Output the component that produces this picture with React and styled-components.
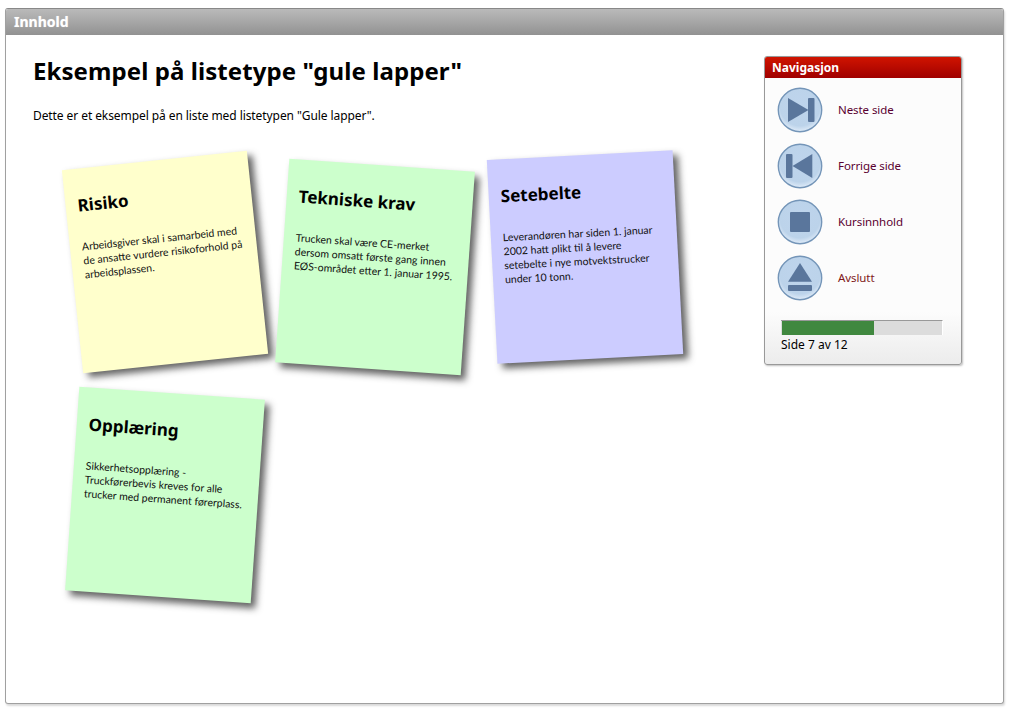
import React from 'react';
import styled, { createGlobalStyle } from 'styled-components';

const Global = createGlobalStyle`
  html, body { margin: 0; padding: 0; background: #fff; }
  body { font-family: "Noto Sans", sans-serif; color: #000; }
`;
const Page = styled.div`
  padding: 8px 5px 0 5px; width: 1010px; height: 709px; box-sizing: border-box; overflow: hidden;
`;
const Panel = styled.section`
  width: 999px; height: 696px; box-sizing: border-box; border: 1px solid #a0a0a0; border-top-color: #888;
  border-radius: 3px; box-shadow: 1px 2px 2px rgba(0,0,0,.15); display: flex; flex-direction: column; overflow: hidden;
`;
const PanelHeader = styled.header`
  height: 26px; flex: none; box-sizing: border-box; padding: 4px 0 0 8px;
  background: linear-gradient(#bababa, #929292); color: #fff;
  font: bold 14px/17px "Noto Sans", sans-serif; text-shadow: 0 0 1px rgba(255,255,255,.5);
`;
const PanelBody = styled.div`
  flex: 1; display: flex; justify-content: space-between; padding: 20px 41px 0 27px;
`;
const Main = styled.main`flex: none; width: 680px;`;
const Title = styled.h1`
  margin: 0; font: bold 24px/32px "Noto Sans", sans-serif; color: #000; letter-spacing: 0.08px;
`;
const Intro = styled.p`
  margin: 20px 0 0; font: 12px/17px "Noto Sans", sans-serif; color: #000; letter-spacing: -0.08px;
`;
const Notes = styled.ul`
  list-style: none; margin: 37px 0 0; padding: 0 0 0 39px; display: flex; flex-wrap: wrap; gap: 28px 24px; width: 660px; box-sizing: border-box;
`;
const Note = styled.li`
  width: 186px; height: 204px; box-sizing: border-box; padding: 26px 12px 0 12px; flex: none;
  background: ${p => p.$bg};
  transform: translateY(${p => p.$dy}px) rotate(${p => p.$rot}deg);
  box-shadow: 5px 5px 7px rgba(33,33,33,.7);
`;
const NoteTitle = styled.h2`
  margin: 0; font: bold 17px/22px "Noto Sans", sans-serif; color: #000; white-space: nowrap;
`;
const NoteText = styled.p`
  margin: 23px 0 0; font: 10.5px/14px "Lato", sans-serif; color: #111; white-space: nowrap;
`;
const Sidebar = styled.aside`
  flex: none; margin-top: 1px; width: 198px; height: 309px; box-sizing: border-box; border: 1px solid #999; border-radius: 3px;
  box-shadow: 1px 1px 2px rgba(0,0,0,.25); overflow: hidden; display: flex; flex-direction: column;
  background: linear-gradient(#fcfcfc 0, #fcfcfc 255px, #ececec 100%);
`;
const SideHead = styled.h3`
  margin: 0; height: 21px; flex: none; box-sizing: border-box; padding: 2px 0 0 7px; color: #fff;
  background: linear-gradient(#d01400, #a00000); font: bold 12px/17px "Noto Sans", sans-serif;
`;
const NavList = styled.nav`
  display: flex; flex-direction: column; gap: 10px; padding: 9px 0 0 12px;
`;
const NavItem = styled.a`
  display: flex; align-items: center; gap: 15px; height: 46px; color: ${p => p.$red ? '#801818' : '#5a0030'};
  font: 11.5px/16px "Noto Sans", sans-serif; letter-spacing: -0.08px; text-decoration: none;
`;
const Progress = styled.div`
  margin: 19px 0 0 16px; width: 162px; height: 15px; box-sizing: border-box; background: #dcdcdc;
  border-top: 1px solid #999; border-right: 1px solid #fff;
`;
const ProgressFill = styled.div`height: 100%; background: #40883f; margin-left: 1px;`;
const ProgressLabel = styled.div`
  margin: 1px 0 0 16px; font: 12px/17px "Noto Sans", sans-serif; color: #000;
`;

const IconSvg = ({ children }) => (
  <svg width="46" height="46" viewBox="0 0 46 46" style={{ flex: 'none' }}>
    <defs>
      <radialGradient id="btn" cx="0.5" cy="0.4" r="0.62">
        <stop offset="0" stopColor="#bed4ec" />
        <stop offset="0.75" stopColor="#bcd3ea" />
        <stop offset="1" stopColor="#e6f0fb" />
      </radialGradient>
    </defs>
    <circle cx="23" cy="23" r="21.7" fill="url(#btn)" stroke="#7495b8" strokeWidth="1.4" />
    <g fill="#5a769c">{children}</g>
  </svg>
);
const Icons = {
  next: <><path d="M11 11 L11 35 L31.5 23 Z" /><rect x="31" y="11" width="6.5" height="24" rx="1" /></>,
  prev: <><rect x="9" y="11" width="6.5" height="24" rx="1" /><path d="M35.3 11 L35.3 35 L15.5 23 Z" /></>,
  stop: <rect x="13" y="13" width="20" height="20" rx="1" />,
  eject: <><path d="M23 8 L11 26.7 L35 26.7 Z" /><rect x="11" y="30" width="24" height="6" rx="1" /></>,
};

const notes = [
  { bg: '#ffffcc', rot: -6, dy: -1, title: 'Risiko', lines: ['Arbeidsgiver skal i samarbeid med', 'de ansatte vurdere risikoforhold på', 'arbeidsplassen.'] },
  { bg: '#ccffcc', rot: 4, dy: 4, title: 'Tekniske krav', lines: ['Trucken skal være CE-merket', 'dersom omsatt første gang innen', 'EØS-området etter 1. januar 1995.'] },
  { bg: '#ccccff', rot: -3, dy: -6, title: 'Setebelte', lines: ['Leverandøren har siden 1. januar', '2002 hatt plikt til å levere', 'setebelte i nye motvektstrucker', 'under 10 tonn.'] },
  { bg: '#ccffcc', rot: 4, dy: 0, title: 'Opplæring', lines: ['Sikkerhetsopplæring -', 'Truckførerbevis kreves for alle', 'trucker med permanent førerplass.'] },
];
const nav = [
  { icon: 'next', label: 'Neste side' },
  { icon: 'prev', label: 'Forrige side' },
  { icon: 'stop', label: 'Kursinnhold' },
  { icon: 'eject', label: 'Avslutt', red: true },
];

export default function App() {
  return (
    <Page>
      <Global />
      <Panel>
        <PanelHeader>Innhold</PanelHeader>
        <PanelBody>
          <Main>
            <Title>Eksempel på listetype "gule lapper"</Title>
            <Intro>Dette er et eksempel på en liste med listetypen "Gule lapper".</Intro>
            <Notes>
              {notes.map(n => (
                <Note key={n.title} $bg={n.bg} $rot={n.rot} $dy={n.dy}>
                  <NoteTitle>{n.title}</NoteTitle>
                  <NoteText>{n.lines.map((l, i) => <React.Fragment key={i}>{l}<br /></React.Fragment>)}</NoteText>
                </Note>
              ))}
            </Notes>
          </Main>
          <Sidebar>
            <SideHead>Navigasjon</SideHead>
            <NavList>
              {nav.map(n => (
                <NavItem key={n.icon} $red={n.red}>
                  <IconSvg>{Icons[n.icon]}</IconSvg>
                  {n.label}
                </NavItem>
              ))}
            </NavList>
            <Progress><ProgressFill style={{ width: `${(7 / 12) * 158}px` }} /></Progress>
            <ProgressLabel>Side 7 av 12</ProgressLabel>
          </Sidebar>
        </PanelBody>
      </Panel>
    </Page>
  );
}
